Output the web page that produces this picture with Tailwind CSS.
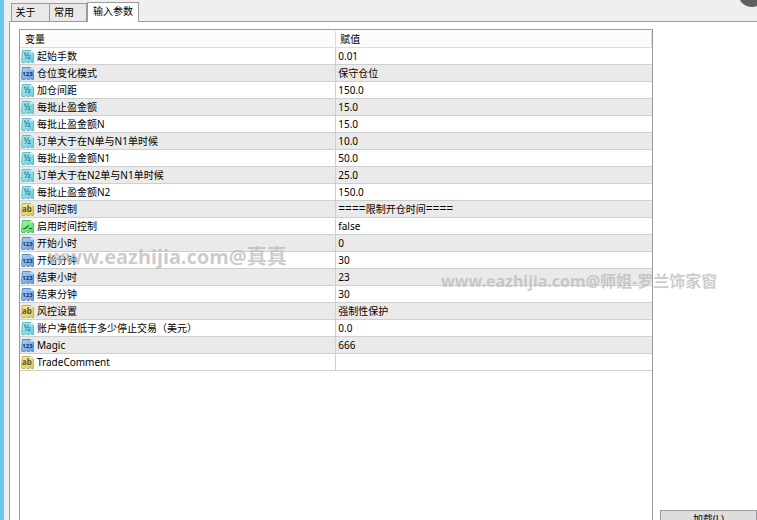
<!DOCTYPE html>
<html lang="zh-CN">
<head>
    <meta charset="UTF-8">
    <meta name="viewport" content="width=device-width, initial-scale=1.0">
    <title>输入参数</title>
    <script src="https://cdn.jsdelivr.net/npm/@tailwindcss/browser@4"></script>
</head>
<body class="relative flex h-screen overflow-hidden bg-[#efefef] font-['Noto_Sans','Noto_Sans_CJK_SC',sans-serif] text-[10px] text-black">
    <svg class="absolute" width="0" height="0" aria-hidden="true">
        <defs>
            <linearGradient id="cyan" x2="1" y2="1"><stop stop-color="#b4eff4"/><stop offset="1" stop-color="#66cbdc"/></linearGradient>
            <linearGradient id="blue" x2="1" y2="1"><stop stop-color="#acd2f7"/><stop offset="1" stop-color="#639bdb"/></linearGradient>
            <linearGradient id="yellow" x2="1" y2="1"><stop stop-color="#f7eeb0"/><stop offset="1" stop-color="#d9c650"/></linearGradient>
            <linearGradient id="green" x2="1" y2="1"><stop stop-color="#a9f7aa"/><stop offset="1" stop-color="#4fd763"/></linearGradient>
            <path id="sheet" d="M1.500.500h8l3 2.500v9.500h-2l-1-1-1.500 1h-2l-1-1-1 1h-3l-.500-1z"/>
            <path id="fold" d="M9.500.500v2.500h3" fill="#fff" fill-opacity=".6"/>
        </defs>
    </svg>

    <div class="w-1 shrink-0 bg-[#67c9ea]"></div>

    <div class="flex min-w-0 flex-1 flex-col pl-[5px]">
        <nav class="flex h-[21px] shrink-0 items-end pl-0.5" role="tablist">
            <button role="tab" class="h-[18px] w-[39px] border border-b-0 border-[#999ba0] bg-[#e9e9e9] pr-2.5">关于</button>
            <button role="tab" class="h-[18px] w-[37px] border border-b-0 border-l-0 border-[#999ba0] bg-[#e9e9e9] pr-2">常用</button>
            <button role="tab" aria-selected="true" class="relative -mb-px h-5 w-[52px] border border-b-0 border-[#999ba0] bg-white pb-0.5">输入参数</button>
        </nav>

        <main class="flex min-h-0 flex-1 border-t border-l border-[#999ba0] bg-white pt-[7px] pl-[9px]">
            <div class="min-w-0 flex-1 border-x border-t border-[#999ba0] pt-px">
                <table class="w-full table-fixed border-collapse text-left">
                    <thead>
                        <tr class="h-4 border-b border-[#dcdcdc] bg-[#fcfcfc] leading-4">
                            <th class="w-1/2 border-r border-[#dcdcdc] p-0 pl-[5px] font-normal">变量</th>
                            <th class="border-r border-[#dcdcdc] p-0 pl-1 font-normal">赋值</th>
                        </tr>
                    </thead>
                    <tbody id="params"></tbody>
                </table>
            </div>
            <div class="-mb-3 flex w-[104px] shrink-0 flex-col justify-end pl-[7px]">
                <button class="h-[22px] border border-[#999ba0] bg-[#dddddd] pb-1">加载(L)</button>
            </div>
        </main>
    </div>

    <!-- Round badge hanging over the top edge -->
    <div class="absolute -top-[21px] -right-[9px] size-7 rounded-full bg-[#606060]"></div>

    <!-- Watermarks -->
    <p class="pointer-events-none absolute top-[243px] left-[48px] text-[20px] leading-7 font-bold whitespace-nowrap text-[#bbbbbb]/75">www.eazhijia.com@真真</p>
    <p class="pointer-events-none absolute top-[269px] left-[441px] text-[16px] leading-6 font-bold whitespace-nowrap text-[#bbbbbb]/75">www.eazhijia.com@师姐-罗兰饰家窗</p>

    <script>
        const icons = {
            double: `<use href="#sheet" fill="url(#cyan)" stroke="#62bccd"/><use href="#fold"/><text x="6" y="9" font-size="8" font-weight="bold" text-anchor="middle" fill="#26869a">½</text>`,
            int: `<use href="#sheet" fill="url(#blue)" stroke="#5c8fca"/><use href="#fold"/><text x="6.500" y="9" font-size="6" font-weight="bold" text-anchor="middle" fill="#102f66">123</text>`,
            string: `<use href="#sheet" fill="url(#yellow)" stroke="#c4b050"/><use href="#fold"/><text x="6" y="9" font-size="8" font-weight="bold" text-anchor="middle" fill="#6b5710">ab</text>`,
            bool: `<use href="#sheet" fill="url(#green)" stroke="#4fc163"/><use href="#fold"/><path d="M2 8.500h2l3.500-3M8 8.500h3" fill="none" stroke="#136b28" stroke-width="1.200"/>`,
        };

        const params = [
            ['double', '起始手数', '0.01'],
            ['int', '仓位变化模式', '保守仓位'],
            ['double', '加仓间距', '150.0'],
            ['double', '每批止盈金额', '15.0'],
            ['double', '每批止盈金额N', '15.0'],
            ['double', '订单大于在N单与N1单时候', '10.0'],
            ['double', '每批止盈金额N1', '50.0'],
            ['double', '订单大于在N2单与N1单时候', '25.0'],
            ['double', '每批止盈金额N2', '150.0'],
            ['string', '时间控制', '<span class="text-[12px]">====</span>限制开仓时间<span class="text-[12px]">====</span>'],
            ['bool', '启用时间控制', 'false'],
            ['int', '开始小时', '0'],
            ['int', '开始分钟', '30'],
            ['int', '结束小时', '23'],
            ['int', '结束分钟', '30'],
            ['string', '风控设置', '强制性保护'],
            ['double', '账户净值低于多少停止交易（美元）', '0.0'],
            ['int', 'Magic', '666'],
            ['string', 'TradeComment', ''],
        ];

        document.getElementById('params').innerHTML = params.map(([type, name, value]) => `
            <tr class="h-[17px] border-b border-[#cfcfcf] even:bg-[#eaeaea]">
                <td class="border-r border-[#cfcfcf] p-0 pl-px">
                    <div class="flex h-4 items-center gap-[3px] leading-4 whitespace-nowrap">
                        <svg class="size-[13px] shrink-0" viewBox="0 0 13 13" aria-hidden="true">${icons[type]}</svg>
                        ${name}
                    </div>
                </td>
                <td class="p-0 pl-0.5 whitespace-nowrap">
                    <div class="h-4 leading-4">${value}</div>
                </td>
            </tr>
        `).join('');
    </script>
</body>
</html>
